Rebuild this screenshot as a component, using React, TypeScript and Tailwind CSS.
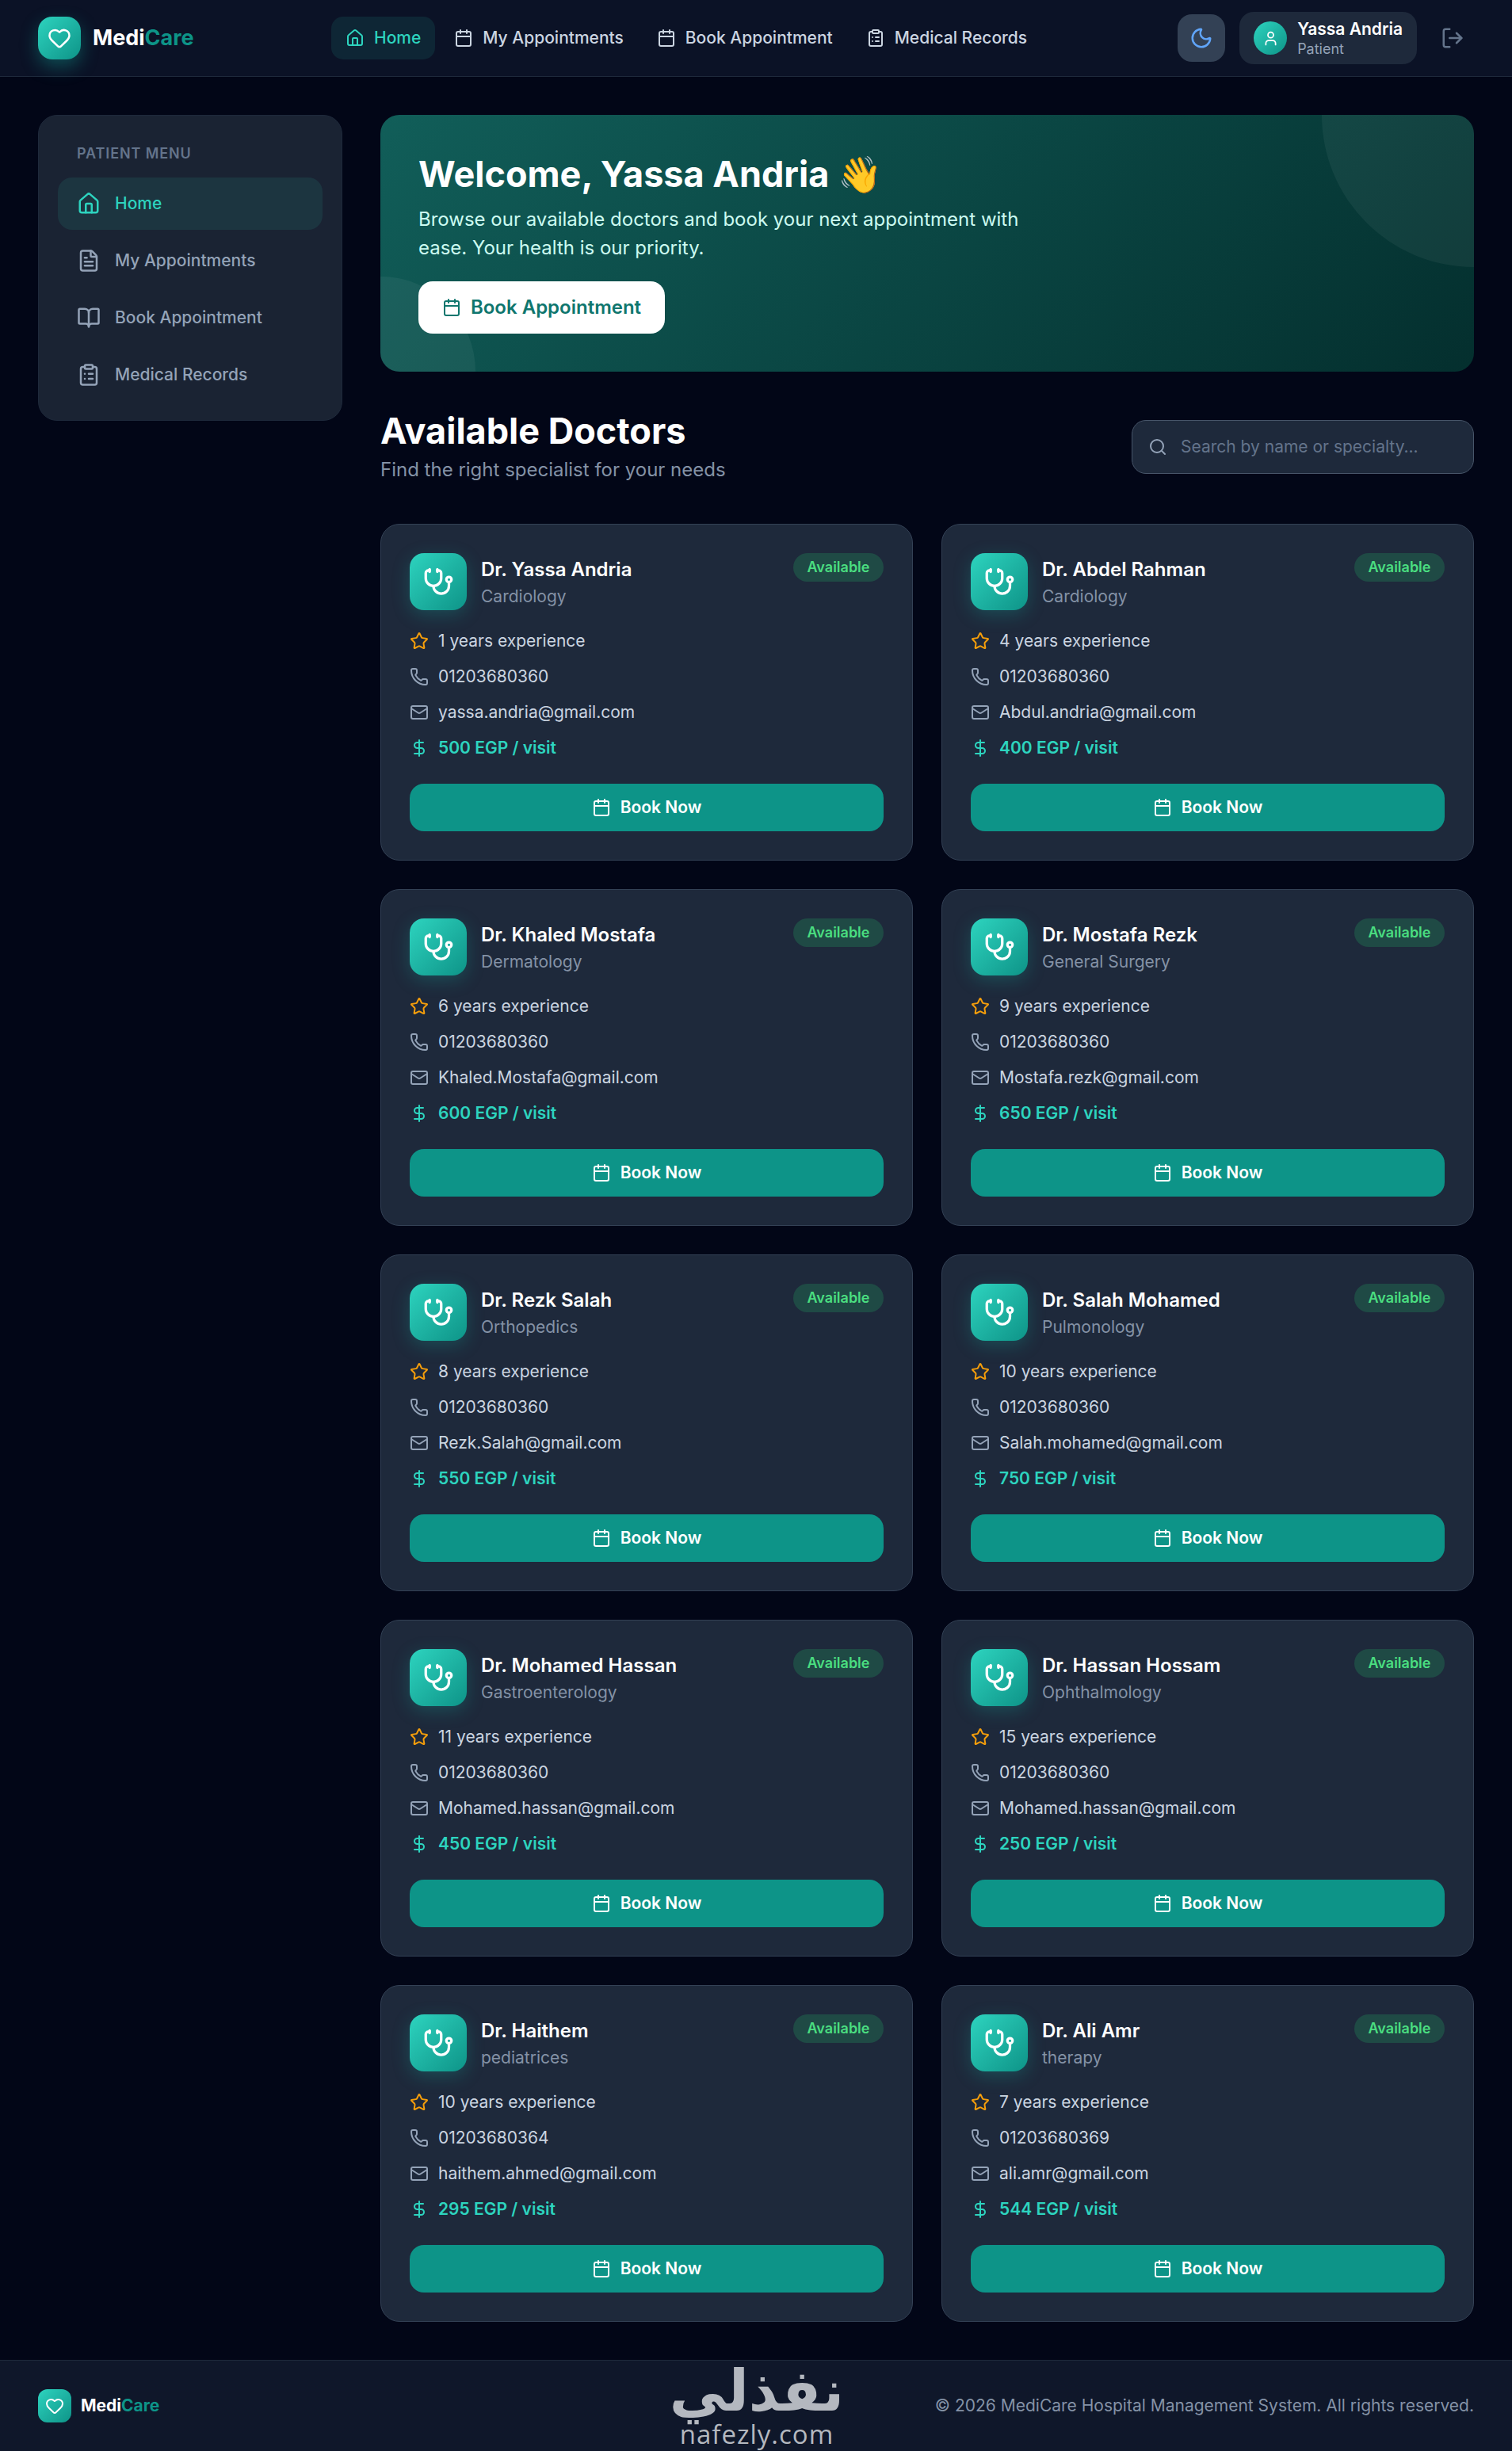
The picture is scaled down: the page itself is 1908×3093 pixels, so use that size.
import { BookOpen, Calendar, ClipboardList, DollarSign, FileText, Heart, Home, LogOut, Mail, Moon, Phone, Search, Star, Stethoscope, User } from "lucide-react";
import type { ReactNode } from "react";

const FONT = { fontFamily: "Inter, 'Noto Color Emoji', sans-serif" };

const DOCTORS = [
  { name: "Dr. Yassa Andria", spec: "Cardiology", years: 1, phone: "01203680360", email: "yassa.andria@gmail.com", fee: 500 },
  { name: "Dr. Abdel Rahman", spec: "Cardiology", years: 4, phone: "01203680360", email: "Abdul.andria@gmail.com", fee: 400 },
  { name: "Dr. Khaled Mostafa", spec: "Dermatology", years: 6, phone: "01203680360", email: "Khaled.Mostafa@gmail.com", fee: 600 },
  { name: "Dr. Mostafa Rezk", spec: "General Surgery", years: 9, phone: "01203680360", email: "Mostafa.rezk@gmail.com", fee: 650 },
  { name: "Dr. Rezk Salah", spec: "Orthopedics", years: 8, phone: "01203680360", email: "Rezk.Salah@gmail.com", fee: 550 },
  { name: "Dr. Salah Mohamed", spec: "Pulmonology", years: 10, phone: "01203680360", email: "Salah.mohamed@gmail.com", fee: 750 },
  { name: "Dr. Mohamed Hassan", spec: "Gastroenterology", years: 11, phone: "01203680360", email: "Mohamed.hassan@gmail.com", fee: 450 },
  { name: "Dr. Hassan Hossam", spec: "Ophthalmology", years: 15, phone: "01203680360", email: "Mohamed.hassan@gmail.com", fee: 250 },
  { name: "Dr. Haithem", spec: "pediatrices", years: 10, phone: "01203680364", email: "haithem.ahmed@gmail.com", fee: 295 },
  { name: "Dr. Ali Amr", spec: "therapy", years: 7, phone: "01203680369", email: "ali.amr@gmail.com", fee: 544 },
];

function Row({ icon, children, className }: { icon: ReactNode; children: ReactNode; className: string }) {
  return (
    <div className={`flex items-center gap-3 text-[21px] leading-[31.5px] ${className}`}>
      {icon}
      <span>{children}</span>
    </div>
  );
}

function DoctorCard({ d }: { d: (typeof DOCTORS)[number] }) {
  return (
    <div className="flex h-[425px] flex-col rounded-3xl border border-[#334155] bg-[#1e293b] p-9">
      <div className="flex items-start justify-between">
        <div className="flex gap-[18px]">
          <div className="flex h-[72px] w-[72px] items-center justify-center rounded-[18px] bg-gradient-to-br from-[#2dd4bf] to-[#0d9488] shadow-[0_6px_22px_rgba(20,184,166,0.25)]">
            <Stethoscope size={39} color="white" strokeWidth={2} />
          </div>
          <div className="pt-[3px]">
            <div className="text-[24px] font-semibold leading-[36px] text-white">{d.name}</div>
            <div className="text-[21px] leading-[31.5px] text-[#8492a6]">{d.spec}</div>
          </div>
        </div>
        <span className="w-[114px] rounded-full bg-[#1f4a45] py-[6px] text-center text-[18px] font-semibold leading-[24px] text-[#4ade80]">Available</span>
      </div>
      <div className="mt-[23px] flex flex-col gap-[13.5px]">
        <Row icon={<Star size={24} color="#f59e0b" />} className="text-[#cbd5e1]">{d.years} years experience</Row>
        <Row icon={<Phone size={24} color="#94a3b8" />} className="text-[#cbd5e1]">{d.phone}</Row>
        <Row icon={<Mail size={24} color="#94a3b8" />} className="text-[#cbd5e1]">{d.email}</Row>
        <Row icon={<DollarSign size={24} color="#2dd4bf" />} className="font-semibold text-[#2dd4bf]">{d.fee} EGP / visit</Row>
      </div>
      <button className="mt-auto flex h-[60px] w-full items-center justify-center gap-3 rounded-[18px] bg-[#0d9488] text-[21px] font-semibold text-white">
        <Calendar size={24} />
        Book Now
      </button>
    </div>
  );
}

function Logo({ small }: { small?: boolean }) {
  return (
    <div className={`flex items-center ${small ? "gap-3" : "gap-[15px]"}`}>
      <div
        className={`flex items-center justify-center bg-gradient-to-br from-[#2dd4bf] to-[#0d9488] ${
          small ? "h-[42px] w-[42px] rounded-xl" : "h-[54px] w-[54px] rounded-[18px] shadow-[0_9px_22px_rgba(20,184,166,0.35)]"
        }`}
      >
        <Heart size={small ? 24 : 30} color="white" strokeWidth={2} />
      </div>
      <span className={`font-bold text-white ${small ? "text-[21px]" : "text-[27px]"}`}>
        Medi<span className="text-[#0d9488]">Care</span>
      </span>
    </div>
  );
}

function SideItem({ icon, label, active }: { icon: ReactNode; label: string; active?: boolean }) {
  return (
    <div className={`flex h-[66px] items-center gap-[18px] rounded-[18px] px-6 text-[21px] font-medium ${active ? "bg-[rgba(45,212,191,0.1)] text-[#2dd4bf]" : "text-[#94a3b8]"}`}>
      {icon}
      {label}
    </div>
  );
}

function NavItem({ icon, label, active }: { icon: ReactNode; label: string; active?: boolean }) {
  return (
    <div className={`flex h-[54px] items-center gap-3 rounded-[15px] px-[18px] text-[21px] font-medium ${active ? "bg-[rgba(45,212,191,0.1)] text-[#2dd4bf]" : "text-[#cbd5e1]"}`}>
      {icon}
      {label}
    </div>
  );
}

export default function App() {
  return (
    <div className="flex min-h-[3093px] flex-col bg-[#020617]" style={FONT}>
      <header className="flex h-[97px] items-center justify-between border-b border-[#1e293b] bg-[#0b1226] px-12">
        <div className="flex items-center">
          <div className="w-[370px]"><Logo /></div>
          <nav className="flex gap-1.5">
            <NavItem active icon={<Home size={24} />} label="Home" />
            <NavItem icon={<Calendar size={24} />} label="My Appointments" />
            <NavItem icon={<Calendar size={24} />} label="Book Appointment" />
            <NavItem icon={<ClipboardList size={24} />} label="Medical Records" />
          </nav>
        </div>
        <div className="flex items-center">
          <div className="flex h-[60px] w-[60px] items-center justify-center rounded-[18px] bg-[#334155]">
            <Moon size={30} color="#60a5fa" />
          </div>
          <div className="ml-[18px] flex h-[66px] items-center gap-[13px] rounded-[18px] bg-[#1e293b] px-[18px]">
            <div className="flex h-[42px] w-[42px] items-center justify-center rounded-full bg-gradient-to-br from-[#2dd4bf] to-[#0d9488]">
              <User size={21} color="white" />
            </div>
            <div>
              <div className="text-[21px] font-semibold leading-[27px] text-white">Yassa Andria</div>
              <div className="text-[18px] leading-[24px] text-[#94a3b8]">Patient</div>
            </div>
          </div>
          <div className="ml-[18px] p-3"><LogOut size={30} color="#64748b" /></div>
        </div>
      </header>

      <div className="flex flex-1 gap-12 p-12">
        <aside className="w-[384px] shrink-0">
          <div className="rounded-3xl border border-[#1e293b] bg-[#1a2333] p-6">
            <div className="px-6 pb-[17px] pt-[10px] text-[18px] font-semibold leading-[27px] tracking-[0.9px] text-[#64748b]">PATIENT MENU</div>
            <div className="flex flex-col gap-1.5">
              <SideItem active icon={<Home size={30} />} label="Home" />
              <SideItem icon={<FileText size={30} />} label="My Appointments" />
              <SideItem icon={<BookOpen size={30} />} label="Book Appointment" />
              <SideItem icon={<ClipboardList size={30} />} label="Medical Records" />
            </div>
          </div>
        </aside>

        <main className="min-w-0 flex-1">
          <section className="relative h-[324px] overflow-hidden rounded-3xl bg-linear-[135deg] from-[#115e59] to-[#042f2e] p-12">
            <div className="absolute -right-48 -top-48 h-96 w-96 rounded-full bg-white/5" />
            <div className="absolute -bottom-[120px] -left-[120px] h-60 w-60 rounded-full bg-white/5" />
            <div className="relative">
              <h1 className="text-[45px] font-bold leading-[54px] text-white">Welcome, Yassa Andria 👋</h1>
              <p className="mt-3 max-w-[800px] text-[24px] leading-[36px] text-[#ccfbf1]">
                Browse our available doctors and book your next appointment with ease. Your health is our priority.
              </p>
              <button className="mt-6 flex h-[66px] w-[311px] items-center justify-center gap-3 rounded-[18px] bg-white text-[24px] font-semibold text-[#0f766e]">
                <Calendar size={24} />
                Book Appointment
              </button>
            </div>
          </section>

          <div className="mt-12 flex items-center justify-between">
            <div>
              <h2 className="text-[45px] font-bold leading-[54px] text-white">Available Doctors</h2>
              <p className="mt-1 text-[24px] leading-[36px] text-[#8492a6]">Find the right specialist for your needs</p>
            </div>
            <div className="flex h-[68px] w-[432px] items-center gap-[17px] rounded-[18px] border border-[#475569] bg-[#1e293b] px-5">
              <Search size={24} color="#94a3b8" />
              <span className="text-[21px] text-[#64748b]">Search by name or specialty...</span>
            </div>
          </div>

          <div className="mt-[50px] grid grid-cols-2 gap-9">
            {DOCTORS.map((d) => (
              <DoctorCard key={d.name} d={d} />
            ))}
          </div>
        </main>
      </div>

      <footer className="relative flex h-[115px] items-center justify-between border-t border-[#1e293b] bg-[#0f172a] px-12">
        <Logo small />
        <span className="text-[21px] text-[#8492a6]">© 2026 MediCare Hospital Management System. All rights reserved.</span>
        <div className="absolute left-[840px] top-[1px] w-[230px] text-center text-[#b4b8bf]">
          <div className="text-[72px] font-bold leading-[74px]" style={{ fontFamily: "'DejaVu Sans', sans-serif" }} dir="rtl">نفذلي</div>
          <div className="text-[33px] leading-[36px] tracking-[1px]" style={{ fontFamily: "'Open Sans', sans-serif" }}>nafezly.com</div>
        </div>
      </footer>
    </div>
  );
}
